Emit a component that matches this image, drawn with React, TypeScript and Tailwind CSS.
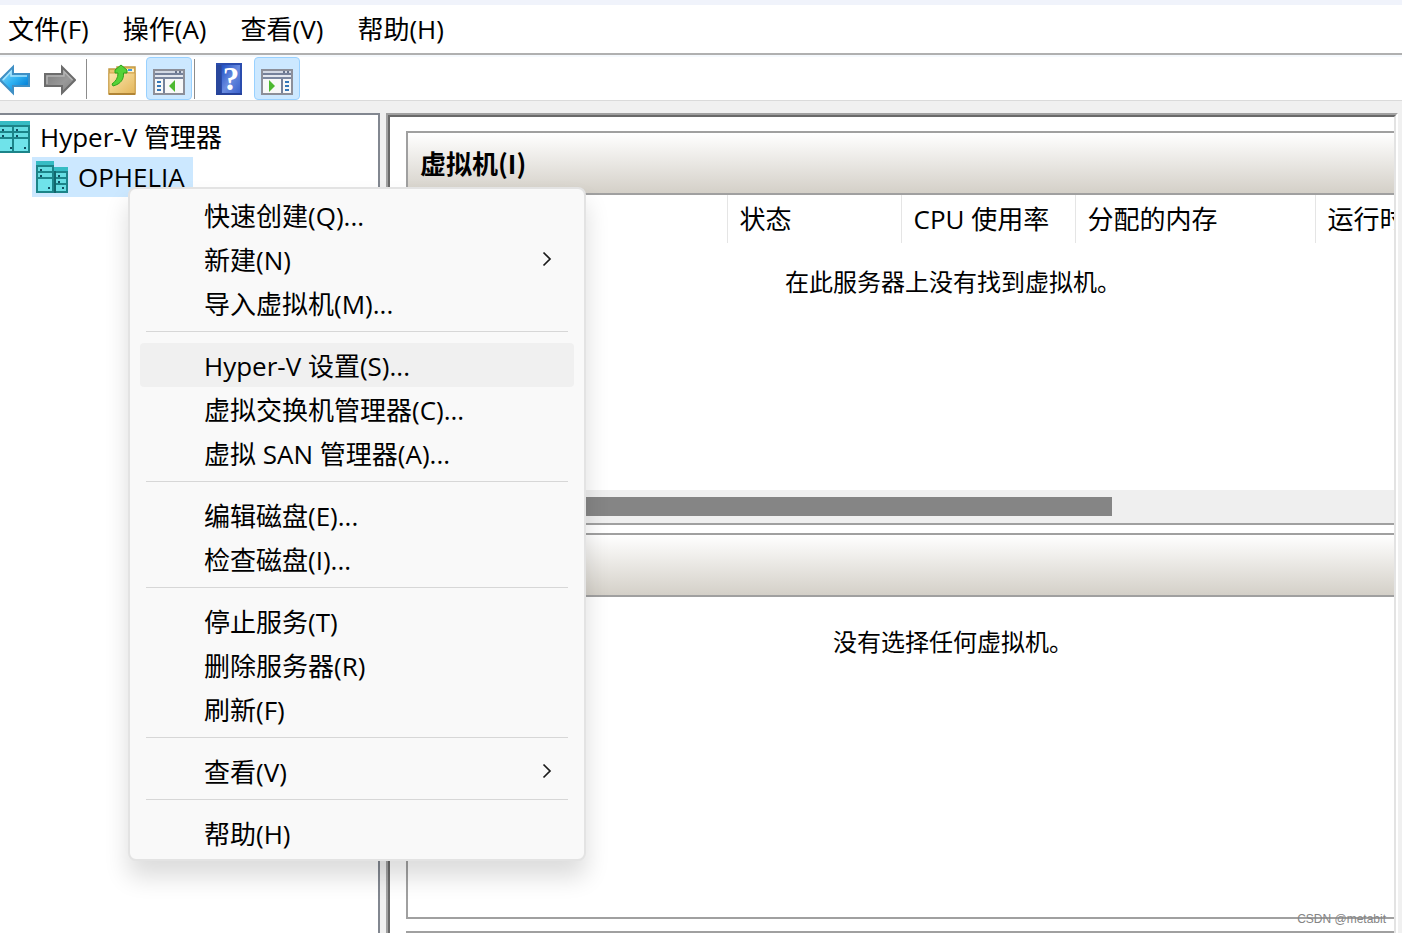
import type { FC, ReactNode } from "react";

const UI_FONT = "font-['Open_Sans','Noto_Sans_CJK_SC',sans-serif]";
const CJK_FONT = "font-['Noto_Sans_CJK_SC',sans-serif]";

const menuBar = ["文件(F)", "操作(A)", "查看(V)", "帮助(H)"];

type Item = { label: string; sub?: boolean; active?: boolean };

const contextMenu: Item[][] = [
  [
    { label: "快速创建(Q)..." },
    { label: "新建(N)", sub: true },
    { label: "导入虚拟机(M)..." },
  ],
  [
    { label: "Hyper-V 设置(S)...", active: true },
    { label: "虚拟交换机管理器(C)..." },
    { label: "虚拟 SAN 管理器(A)..." },
  ],
  [{ label: "编辑磁盘(E)..." }, { label: "检查磁盘(I)..." }],
  [
    { label: "停止服务(T)" },
    { label: "删除服务器(R)" },
    { label: "刷新(F)" },
  ],
  [{ label: "查看(V)", sub: true }],
  [{ label: "帮助(H)" }],
];

const BackIcon: FC = () => (
  <svg width="30" height="32" viewBox="2 0 30 32">
    <defs>
      <linearGradient id="back" x1="0" y1="0" x2="1" y2="1">
        <stop offset="0" stopColor="#9be0fb" />
        <stop offset="0.5" stopColor="#2fb2f2" />
        <stop offset="0.8" stopColor="#0a86da" />
        <stop offset="1" stopColor="#5cc6f8" />
      </linearGradient>
    </defs>
    <path
      d="M2 16 15 3V10H31V22H15V29Z"
      fill="url(#back)"
      stroke="#3f8fc4"
      strokeWidth="2"
    />
    <path d="M5 16 13 7.500V12H29" fill="none" stroke="#a9e4fc" strokeWidth="1.500" />
  </svg>
);

const ForwardIcon: FC = () => (
  <svg width="32" height="32" viewBox="0 0 32 32">
    <defs>
      <linearGradient id="fwd" x1="0" y1="0" x2="1" y2="1">
        <stop offset="0" stopColor="#777777" />
        <stop offset="0.6" stopColor="#999999" />
        <stop offset="1" stopColor="#808080" />
      </linearGradient>
    </defs>
    <path
      d="M31 16 18 3V10H1V22H18V29Z"
      fill="url(#fwd)"
      stroke="#6c6c6c"
      strokeWidth="2"
    />
    <path
      d="M3 20V12H20V7.500L28.500 16"
      fill="none"
      stroke="#b4b4b4"
      strokeWidth="1.500"
    />
  </svg>
);

const FolderUpIcon: FC = () => (
  <svg width="28" height="32" viewBox="0 0 28 32">
    <defs>
      <linearGradient id="folder" x1="0" y1="0" x2="1" y2="1">
        <stop offset="0" stopColor="#fbe7ae" />
        <stop offset="1" stopColor="#e3b559" />
      </linearGradient>
    </defs>
    <path d="M1 5H9V3H27V30H1Z" fill="#e9c572" stroke="#c49a45" strokeWidth="1.500" />
    <path d="M18 5H26V8H18Z" fill="#fff3cf" />
    <path d="M20 5H24V7H20Z" fill="#3f9be8" />
    <path d="M1 9H27V30H1Z" fill="url(#folder)" stroke="#cfa350" />
    <path d="M1 30H27" stroke="#b08436" strokeWidth="2" />
    <path
      d="M13 1 19 6V9H15.500C16 15 13 20 5 22L4 20C8 17 10 14 10 9H7V6Z"
      fill="#55d238"
      stroke="#2fa31c"
    />
  </svg>
);

const HelpIcon: FC = () => (
  <svg width="26" height="32" viewBox="0 0 26 32" className="overflow-visible">
    <defs>
      <linearGradient id="help" x1="0" y1="0" x2="1" y2="1">
        <stop offset="0" stopColor="#1f50c4" />
        <stop offset="0.5" stopColor="#6a8ce0" />
        <stop offset="1" stopColor="#3c62cc" />
      </linearGradient>
    </defs>
    <path d="M0 0H26V32H0Z" fill="#2a4cae" />
    <path d="M6 2H24V30H6Z" fill="url(#help)" />
    <path d="M0 2H5V32H0Z" fill="#29479c" />
    <path d="M0 30H26V32H0Z" fill="#26429a" />
    <text
      x="15"
      y="27"
      textAnchor="middle"
      fontSize="33"
      fontFamily="Liberation Serif"
      fontWeight="bold"
      fill="#ffffff"
    >
      ?
    </text>
  </svg>
);

// Console window with a pane on one side and an arrow pointing at it.
const PaneIcon: FC<{ side: "left" | "right" }> = ({ side }) => (
  <svg width="32" height="26" viewBox="0 0 32 26" shapeRendering="crispEdges">
    <path d="M0 0H32V26H0Z" fill="#8c8f99" />
    <path d="M2 2H30V4H2Z" fill="#d3d9e4" />
    <path d="M22 2H24V4H22ZM26 2H28V4H26Z" fill="#68748c" />
    <path d="M2 4H30V6H2Z" fill="#75819a" />
    <path d="M2 6H30V8H2Z" fill="#e4e8ef" />
    <path d="M2 8H30V10H2Z" fill="#7b879f" />
    <path d="M2 10H30V24H2Z" fill="#f8f8f8" />
    {side === "left" ? (
      <>
        <path d="M10 10H12V24H10Z" fill="#75819a" />
        <path d="M4 12H8V14H4ZM4 16H8V18H4ZM4 20H8V22H4Z" fill="#3678b8" />
        <path d="M22 11V23L16 17Z" fill="#4cb82f" shapeRendering="auto" />
      </>
    ) : (
      <>
        <path d="M20 10H22V24H20Z" fill="#75819a" />
        <path d="M24 12H28V14H24ZM24 16H28V18H24ZM24 20H28V22H24Z" fill="#3678b8" />
        <path d="M8 11V23L14 17Z" fill="#4cb82f" shapeRendering="auto" />
      </>
    )}
  </svg>
);

const ServersIcon: FC = () => (
  <svg width="30" height="32" viewBox="2 0 30 32" shapeRendering="crispEdges">
    <path d="M0 0H32V32H0Z" fill="#1c8489" />
    <path d="M0 0H32V4H0Z" fill="#36bcc4" />
    <path d="M2 6H14V10H2ZM16 6H30V10H16ZM2 12H14V16H2ZM16 12H30V16H16Z" fill="#66dde2" />
    <path d="M2 18H14V30H2ZM16 18H30V30H16Z" fill="#6fe3ea" />
    <path
      d="M4 8H6V10H4ZM18 8H20V10H18ZM4 14H6V16H4ZM18 14H20V16H18ZM12 26H14V28H12ZM26 26H28V28H26Z"
      fill="#124f60"
    />
  </svg>
);

const HostIcon: FC = () => (
  <svg width="32" height="32" viewBox="0 0 32 32" shapeRendering="crispEdges">
    <path d="M0 0H18V32H0Z" fill="#1c8489" />
    <path d="M0 0H18V4H0Z" fill="#36bcc4" />
    <path d="M2 6H16V10H2ZM2 12H16V16H2Z" fill="#66dde2" />
    <path d="M2 18H16V30H2Z" fill="#6fe3ea" />
    <path d="M18 6H32V32H18Z" fill="#1c8489" />
    <path d="M18 6H32V10H18Z" fill="#36bcc4" />
    <path d="M18 10H20V32H18Z" fill="#12666d" />
    <path d="M20 12H30V16H20ZM20 18H30V22H20ZM20 24H30V30H20Z" fill="#66dde2" />
    <path
      d="M4 8H6V10H4ZM4 14H6V16H4ZM12 26H14V28H12ZM22 14H24V16H22ZM22 20H24V22H22ZM26 26H28V28H26Z"
      fill="#124f60"
    />
  </svg>
);

const Chevron: FC = () => (
  <svg width="10" height="16" viewBox="0 0 10 16" className="mb-0.5">
    <path d="M1.500 1.500 8 8 1.500 14.500" fill="none" stroke="#1a1a1a" strokeWidth="1.700" />
  </svg>
);

const ToggleButton: FC<{ label: string; children: ReactNode }> = ({ label, children }) => (
  <button
    type="button"
    aria-label={label}
    aria-pressed="true"
    className="flex h-full w-[46px] items-center justify-center rounded border border-[#99d1ff] bg-[#cce8ff] pt-1.5"
  >
    {children}
  </button>
);

const PanelHeader: FC<{ children?: ReactNode }> = ({ children }) => (
  <h2
    className={`h-[62px] shrink-0 border-b-2 border-[#a0a0a0] bg-linear-to-b from-white to-[#d4d0c8] px-3 text-[26px] leading-[60px] font-bold ${CJK_FONT}`}
  >
    {children}
  </h2>
);

const ContextMenu: FC = () => (
  <div
    role="menu"
    className="absolute top-[187px] left-32 w-[458px] rounded-lg border-2 border-[#e3e3e3] bg-[#f9f9f9] px-2.5 py-1 shadow-[0_16px_24px_rgba(0,0,0,0.14)]"
  >
    {contextMenu.map((group, i) => (
      <div key={i} role="group">
        {i > 0 && <hr className="mx-1.5 mt-1.5 mb-[11px] border-t border-[#d7d7d7]" />}
        {group.map((item) => (
          <button
            key={item.label}
            type="button"
            role="menuitem"
            className={`flex h-11 w-full items-center justify-between rounded pt-px pr-[22px] pl-16 ${
              item.active ? "bg-[#f0f0f0]" : ""
            }`}
          >
            {item.label}
            {item.sub && <Chevron />}
          </button>
        ))}
      </div>
    ))}
  </div>
);

export default function App() {
  return (
    <div
      className={`relative flex h-screen flex-col overflow-hidden bg-[#f0f0f0] text-[26px] leading-10 whitespace-nowrap text-black ${UI_FONT}`}
    >
      <nav className="flex h-[55px] shrink-0 gap-[34px] border-t-[5px] border-b-2 border-t-[#f0f3fb] border-b-[#b0b0b0] bg-white px-2">
        {menuBar.map((label) => (
          <button key={label} type="button">
            {label}
          </button>
        ))}
      </nav>

      <div className="flex h-[46px] shrink-0 items-center border-t-2 border-b border-t-[#f5f9fd] border-b-[#dadada] bg-white">
        <button type="button" aria-label="后退" className="pt-0.5">
          <BackIcon />
        </button>
        <button type="button" aria-label="前进" className="ml-3.5 pt-0.5">
          <ForwardIcon />
        </button>
        <div className="ml-2.5 h-10 w-px bg-[#8c8c8c]" />
        <button
          type="button"
          aria-label="上移一级"
          className="ml-[13px] flex w-11 justify-center pt-0.5"
        >
          <FolderUpIcon />
        </button>
        <div className="ml-0.5 h-full">
          <ToggleButton label="显示/隐藏控制台树">
            <PaneIcon side="left" />
          </ToggleButton>
        </div>
        <div className="ml-0.5 h-10 w-px bg-[#8c8c8c]" />
        <button type="button" aria-label="帮助" className="ml-3 flex w-11 justify-center">
          <HelpIcon />
        </button>
        <div className="ml-[3px] h-full">
          <ToggleButton label="显示/隐藏操作窗格">
            <PaneIcon side="right" />
          </ToggleButton>
        </div>
      </div>

      <div className="flex min-h-0 flex-1 gap-1.5 pt-3 pr-1">
        <aside className="w-[380px] shrink-0 border-t-2 border-r-2 border-[#828790] bg-white pt-0.5">
          <div className="flex h-10 items-center gap-2.5">
            <ServersIcon />
            <span>Hyper-V 管理器</span>
          </div>
          <div className="ml-8 flex h-10 w-fit items-center gap-2.5 bg-[#cce8ff] pr-2 pl-1">
            <HostIcon />
            <span>OPHELIA</span>
          </div>
        </aside>

        {/* sunken outer frame, two tones per edge */}
        <div className="flex min-w-0 flex-1 border-t-2 border-r-2 border-l-2 border-t-[#a0a0a0] border-r-white border-l-[#a0a0a0]">
          <main className="flex min-w-0 flex-1 flex-col overflow-hidden border-t-2 border-r-2 border-l-2 border-t-[#696969] border-r-[#e3e3e3] border-l-[#696969] bg-white pt-3.5 pl-4">
            <section className="flex h-[394px] w-[1094px] shrink-0 flex-col border-2 border-[#a0a0a0]">
              <PanelHeader>虚拟机(I)</PanelHeader>
              <table className="w-full table-fixed text-left">
                <thead>
                  <tr className="h-12">
                    <th className="w-[319px] border-r border-[#e5e5e5] px-3 py-0 font-normal">
                      名称
                    </th>
                    <th className="w-[174px] border-r border-[#e5e5e5] px-3 py-0 font-normal">
                      状态
                    </th>
                    <th className="w-[174px] border-r border-[#e5e5e5] px-3 py-0 font-normal">
                      CPU 使用率
                    </th>
                    <th className="w-60 border-r border-[#e5e5e5] px-3 py-0 font-normal">
                      分配的内存
                    </th>
                    <th className="px-3 py-0 font-normal">运行时间</th>
                  </tr>
                </thead>
              </table>
              <p className={`mt-[18px] flex-1 text-center text-2xl leading-10 ${CJK_FONT}`}>
                在此服务器上没有找到虚拟机。
              </p>
              <div className="h-[33px] shrink-0 bg-[#efefef] py-[7px]">
                <div className="ml-8 h-[19px] w-[672px] bg-[#858585]" />
              </div>
            </section>

            <section className="mt-2 flex w-[1094px] flex-1 flex-col border-2 border-[#a0a0a0]">
              <PanelHeader />
              <p className={`mt-6 text-center text-2xl leading-10 ${CJK_FONT}`}>
                没有选择任何虚拟机。
              </p>
            </section>

            <section className="mt-3 h-0.5 w-[1094px] shrink-0 bg-[#a0a0a0]" />
          </main>
        </div>
      </div>

      <ContextMenu />

      <span className="absolute right-4 bottom-1.5 font-['Liberation_Sans',sans-serif] text-xs leading-4 text-[#858585]">
        CSDN @metabit
      </span>
    </div>
  );
}
